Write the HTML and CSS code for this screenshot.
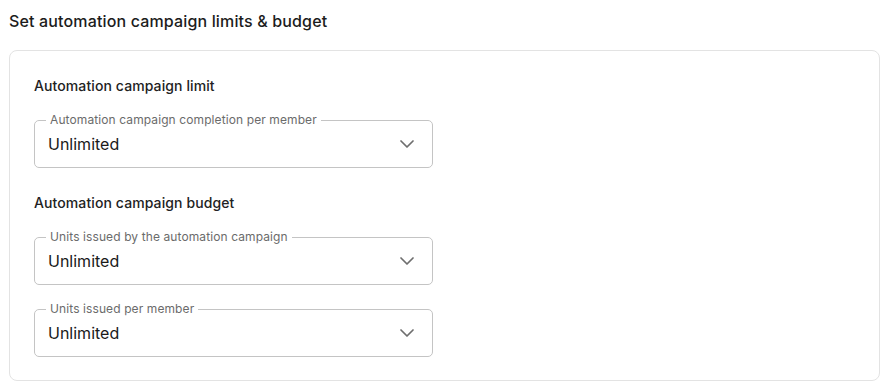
FILE: index.html
```html
<!DOCTYPE html>
<html lang="en">
<head>
<meta charset="utf-8">
<title>Automation campaign limits</title>
<link rel="stylesheet" href="styles.css">
</head>
<body>
<main class="page">
  <h1 class="page-title">Set automation campaign limits &amp; budget</h1>
  <section class="card">
    <div class="group">
      <h2 class="group-title">Automation campaign limit</h2>
      <fieldset class="select">
        <legend class="select-label">Automation campaign completion per member</legend>
        <div class="select-row">
          <span class="select-value">Unlimited</span>
          <svg class="chevron" width="14" height="8" viewBox="0 0 14 8" aria-hidden="true"><path d="M1 1l6 6 6-6" fill="none" stroke="currentColor" stroke-width="1.7" stroke-linecap="round" stroke-linejoin="round"/></svg>
        </div>
      </fieldset>
    </div>
    <div class="group">
      <h2 class="group-title">Automation campaign budget</h2>
      <fieldset class="select">
        <legend class="select-label">Units issued by the automation campaign</legend>
        <div class="select-row">
          <span class="select-value">Unlimited</span>
          <svg class="chevron" width="14" height="8" viewBox="0 0 14 8" aria-hidden="true"><path d="M1 1l6 6 6-6" fill="none" stroke="currentColor" stroke-width="1.7" stroke-linecap="round" stroke-linejoin="round"/></svg>
        </div>
      </fieldset>
      <fieldset class="select">
        <legend class="select-label">Units issued per member</legend>
        <div class="select-row">
          <span class="select-value">Unlimited</span>
          <svg class="chevron" width="14" height="8" viewBox="0 0 14 8" aria-hidden="true"><path d="M1 1l6 6 6-6" fill="none" stroke="currentColor" stroke-width="1.7" stroke-linecap="round" stroke-linejoin="round"/></svg>
        </div>
      </fieldset>
    </div>
  </section>
</main>
</body>
</html>
```

FILE: styles.css
```css
* { box-sizing: border-box; }
html, body { margin: 0; padding: 0; background: #ffffff; }
body {
  font-family: Inter, "Noto Sans", "Liberation Sans", sans-serif;
  color: #1f1f1f;
}
.page {
  padding: 9px 4px 0 9px;
}
.page-title {
  margin: 0 0 17px;
  font-size: 16px;
  line-height: 24px;
  font-weight: 500;
  letter-spacing: 0.15px;
  color: #1c1c1c;
}
.card {
  border: 1px solid #e3e3e3;
  border-radius: 8px;
  padding: 25px 24px 23px;
  display: flex;
  flex-direction: column;
  gap: 25px;
}
.group {
  display: flex;
  flex-direction: column;
  gap: 16px;
  align-items: flex-start;
}
.group-title {
  margin: 0;
  font-size: 14px;
  line-height: 20px;
  font-weight: 500;
  letter-spacing: 0.1px;
  color: #222222;
}
.select {
  width: 399px;
  margin: 0;
  padding: 0 18px 11px 13px;
  border: 1px solid #c4c4c4;
  border-radius: 5px;
  min-inline-size: 0;
}
.select-label {
  margin-left: -2px;
  padding: 0 4px;
  font-size: 12px;
  line-height: 16px;
  letter-spacing: 0.1px;
  color: #6b6b6b;
}
.select-row {
  display: flex;
  align-items: center;
  justify-content: space-between;
  padding-top: 4px;
  height: 28px;
}
.select-value {
  font-size: 16px;
  line-height: 24px;
  color: #1a1a1a;
}
.chevron {
  color: #6e6e6e;
  display: block;
}
```
